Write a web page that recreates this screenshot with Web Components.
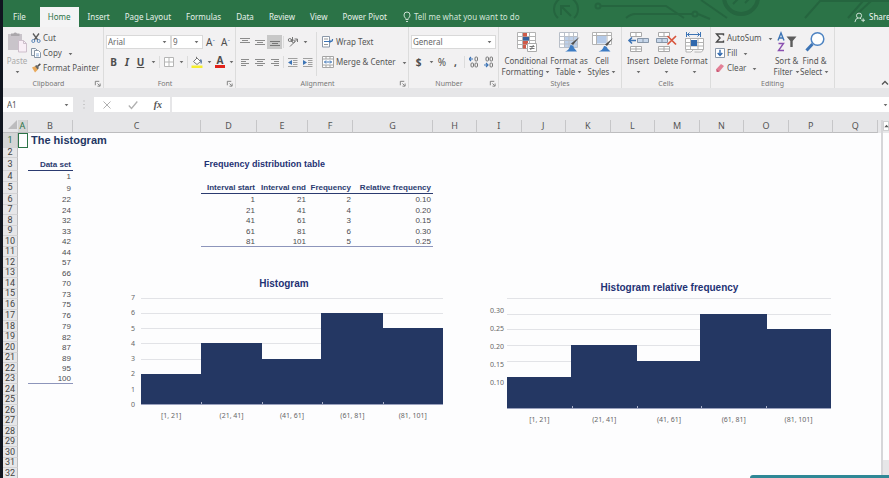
<!DOCTYPE html>
<html lang="en">
<head>
<meta charset="utf-8">
<title>The histogram</title>
<style>
  html, body { margin: 0; height: 100%; overflow: hidden; background: #10151f; }
  body { font: 8px/10px "Noto Sans", sans-serif; color: #555; }
</style>
</head>
<body>
<xl-app></xl-app>
<script>
const ICONS = {
  down: ['0 0 6 4', '<path d="M.8.8h4.4L3 3.4z" fill="#6b6b6b"/>'],
  up: ['0 0 6 4', '<path d="M3 .4 5.6 3.4H.4z" fill="#555"/>'],
  collapse: ['0 0 8 6', '<path d="M1 4.5 4 1.5 7 4.5" fill="none" stroke="#555" stroke-width="1.3"/>'],
  launch: ['0 0 8 8', '<path d="M1.5 6V1.5H6M4 4l2.500 2.500M7 4v3H4" fill="none" stroke="#777" stroke-width="1"/>'],
  paste: ['0 0 22 22', '<path d="M2 3h14v16H2z" fill="#c9c4ca"/><path d="M5 5V2.500h2.500a2 2 0 0 1 3.500 0H13.500V5z" fill="#aaa7ab"/><path d="M12.500 9.500h5l3 3v8.500h-8z" fill="#f8eef6" stroke="#cdbfcb"/><path d="M17.500 9.500v3h3" fill="none" stroke="#cdbfcb"/>'],
  cut: ['0 0 10 10', '<path d="M2 .5 6.800 7M8 .5 3.200 7" stroke="#5c5c5c" stroke-width="1.300" fill="none"/><circle cx="2.300" cy="8" r="1.500" fill="none" stroke="#5b86b8"/><circle cx="7.700" cy="8" r="1.500" fill="none" stroke="#5b86b8"/>'],
  copy: ['0 0 10 10', '<path d="M.5.500h4l1.500 1.500v5.500H.5z" fill="#f4f6f9" stroke="#8795a5"/><path d="M3.500 2.500h4l2 2v5h-6z" fill="#fff" stroke="#8795a5"/><path d="M5 6h3M5 7.800h3" stroke="#6f9acb" stroke-width=".8"/>'],
  brush: ['0 0 10 10', '<path d="M1 4.500 4.500 3 7 6.500 4 9.500z" fill="#e9a95b"/><path d="M4 3 5.500 2 8 5 6.500 6.500z" fill="#666"/><path d="M6.500 3.500 9.300.8" stroke="#4d4d4d" stroke-width="1.600"/>'],
  grid: ['0 0 10 10', '<path d="M.5.500h9v9h-9zM5 .5v9M.5 5h9" fill="#fff" stroke="#b5b5b5"/>'],
  fill: ['0 0 12 12', '<path d="M2.500 5.500 6 2l3.500 3.500L6 8.500z" fill="#fff" stroke="#777"/><path d="M5.500 3V.8" stroke="#777"/><path d="M9.500 3.500q1.500 2 .5 4" stroke="#41689b" stroke-width="1.300" fill="none"/><path d="M.5 9.500h11V12H.5z" fill="#f6ee2e"/>'],
  atop: ['0 0 10 10', '<path d="M0 1.500h10M2 3.500h6M0 5.500h10" stroke="#8b8b8b"/>'],
  amid: ['0 0 10 10', '<path d="M0 3.500h10M2 5.500h6M0 7.500h10" stroke="#8b8b8b"/>'],
  abot: ['0 0 10 10', '<path d="M0 4.500h10M2 6.500h6M0 8.500h10" stroke="#777"/>'],
  left: ['0 0 10 10', '<path d="M1 2.500h8M1 4.500h5M1 6.500h8M1 8.500h5" stroke="#8b8b8b"/>'],
  center: ['0 0 10 10', '<path d="M0 2.500h10M2 4.500h6M0 6.500h10M2 8.500h6" stroke="#8b8b8b"/>'],
  right: ['0 0 10 10', '<path d="M1 2.500h8M4 4.500h5M1 6.500h8M4 8.500h5" stroke="#8b8b8b"/>'],
  orient: ['0 0 12 12', '<path d="M3 10.500 10.500 3M10.500 3v3M10.500 3h-3" stroke="#777" fill="none"/><circle cx="2.800" cy="4" r="1.500" fill="none" stroke="#777"/><path d="M4.500 3v3M5.500 1v4.500" stroke="#777"/><circle cx="6.500" cy="5.500" r="1.300" fill="none" stroke="#777"/>'],
  outdent: ['0 0 11 11', '<path d="M1 1.500h9.500M6 3.500h4.500M6 5.500h4.500M6 7.500h4.500M1 9.500h9.500" stroke="#a0a0a0"/><path d="M5 3v5L1 5.500z" fill="#3d74b5"/>'],
  indent: ['0 0 11 11', '<path d="M1 1.500h9.500M6 3.500h4.500M6 5.500h4.500M6 7.500h4.500M1 9.500h9.500" stroke="#a0a0a0"/><path d="M1 3v5l4-2.500z" fill="#3d74b5"/>'],
  wrap: ['0 0 12 12', '<path d="M.5.500h7v10.500h-7z" fill="#fff" stroke="#8b98a8"/><path d="M2 3h4M2 8.500h4" stroke="#999"/><path d="M2 5.500h6.500q2 0 2-2V3" stroke="#3d74b5" stroke-width="1.200" fill="none"/><path d="M6 5.500 8.500 3.800v3.400z" fill="#3d74b5"/>'],
  merge: ['0 0 12 12', '<path d="M.5.500h11v11H.5zM.5 3h11M.5 9h11M4 .5V3M8 .5V3M4 9v2.500M8 9v2.500" fill="#fff" stroke="#a5a5a5"/><path d="M2.500 6h7M4 4.500 2.500 6 4 7.500M8 4.500 9.500 6 8 7.500" stroke="#3d74b5" fill="none"/>'],
  cond: ['0 0 22 22', '<path d="M2.500 1.500h18v16h-18zM2.500 5.500h18M2.500 9.500h18M2.500 13.500h18M7.500 1.500v16M14.500 1.500v16" fill="#fff" stroke="#b3b3b3"/><path d="M8 2h4v3.500H8zM8 14h3v3.500H8z" fill="#cf5a48"/><path d="M8 6h6v3.500H8z" fill="#35619c"/><path d="M8 10h5v3.500H8z" fill="#cf5a48"/><path d="M12.500 12.500h9v8h-9z" fill="#fff" stroke="#aaa"/><path d="M14.500 15.500h5M14.500 17.500h5M18.500 14l-3 5" stroke="#777"/>'],
  fmttab: ['0 0 22 22', '<path d="M1.500 1.500h18v15h-18z" fill="#fff"/><path d="M7 5.500h12.500v11H7z" fill="#bdd0ea"/><path d="M1.500 1.500h18v15h-18zM1.500 5.500h18M1.500 9.500h18M1.500 13h18M6.500 1.500v15M11 1.500v15M15.500 1.500v15" fill="none" stroke="#b9bfc8"/><path d="M21.500 6 15 14l-2-1.500z" fill="#505050"/><path d="M12.500 14q3 0 3.500 3l3 3.500H7q4-1 5.500-6.500z" fill="#3d7cc4"/>'],
  cellst: ['0 0 22 22', '<path d="M1.500 1.500h19v12h-19zM1.500 4.500h19M5.500 1.500v12M16 1.500v12" fill="#fff" stroke="#b3b3b3"/><path d="M6 5h9.500v7.500H6z" fill="#b5cae8"/><path d="M22 7 16 15l-2-1.500z" fill="#505050"/><path d="M13 15q3 0 3.500 2.500l3 3H7.500q4-1 5.500-5.500z" fill="#3d7cc4"/>'],
  ins: ['0 0 22 22', '<path d="M3.500 1.500h11v4h-11zM9 1.500v4M3.500 15.500h11v5h-11zM9 15.500v5M3.500 18h11" fill="#fff" stroke="#a9a9a9"/><path d="M10.500 7.500h11v4h-11zM16 7.500v4" fill="#c6d6ea" stroke="#8796a8"/><path d="M2 9.500h7M5 6.500 2 9.500l3 3" fill="none" stroke="#3d74b5" stroke-width="1.600"/>'],
  del: ['0 0 22 22', '<path d="M3.500 1.500h11v4h-11zM9 1.500v4M3.500 15.500h11v5h-11zM9 15.500v5M3.500 18h11" fill="#fff" stroke="#a9a9a9"/><path d="M1.500 7.500h11v4h-11zM7 7.500v4" fill="#c6d6ea" stroke="#8796a8"/><path d="m12.500 5 8.500 8.500M21 5l-8.500 8.500" stroke="#d8553c" stroke-width="1.700"/>'],
  fmt: ['0 0 22 22', '<path d="M3.500 1v5M17.500 1v5M4 3.500h13M6.500 1.500l-2 2 2 2M14.500 1.500l2 2-2 2" stroke="#3d74b5" fill="none"/><path d="M2.500 7.500h18v11h-18zM2.500 11.500h18M2.500 15h18M7.500 7.500v11M15 7.500v11M3 18.500v2.500h5l2-2M20.500 18.500l-2 2.500h-7" fill="#fff" stroke="#b2b2b2"/><path d="M8 9h6v6H8z" fill="#2f68ad"/>'],
  sigma: ['0 0 10 10', '<path d="M8.500 2.500V1H1.500L5 5 1.500 9h7V7.500" fill="none" stroke="#4a4a4a" stroke-width="1.400"/>'],
  filld: ['0 0 10 10', '<path d="M.5.500h9v9h-9z" fill="#fff" stroke="#8b98a8"/><path d="M5 1.800v5.500M2.700 5 5 7.500 7.300 5" stroke="#2f68ad" stroke-width="1.400" fill="none"/>'],
  eraser: ['0 0 10 10', '<path d="M1.300 6 6 1l3 2-4.500 5.500-2.700.5z" fill="#e37f96"/><path d="M1.300 6 4.500 8.500l-2.700.5z" fill="#c6546f"/>'],
  sort: ['0 0 22 22', '<path d="M2 9.500 5 2l3 7.500M3 7h4" fill="none" stroke="#3d74b5" stroke-width="1.400"/><path d="M2.500 12.500H7.500L2.500 19.500H8" fill="none" stroke="#8b50b0" stroke-width="1.400"/><path d="M10.500 5.500h10l-3.800 4.500v6h-2.400v-6z" fill="#5c5c5c"/>'],
  find: ['0 0 22 22', '<path d="M8.500 13 2.500 19.500" stroke="#3d74b5" stroke-width="3"/><circle cx="13.500" cy="8" r="6.300" fill="#fdfefe" stroke="#4d83c2" stroke-width="1.500"/>'],
  deci: ['0 0 10 12', '<path d="M0 3h4M2 1 0 3l2 2" fill="none" stroke="#3d74b5" stroke-width="1.200"/><rect x="6" y="1" width="2.500" height="4" rx="1" fill="none" stroke="#777"/><rect x="2" y="7" width="2.500" height="4" rx="1" fill="none" stroke="#777"/><rect x="6" y="7" width="2.500" height="4" rx="1" fill="none" stroke="#777"/>'],
  decd: ['0 0 10 12', '<rect x="2" y="1" width="2.500" height="4" rx="1" fill="none" stroke="#777"/><rect x="6" y="1" width="2.500" height="4" rx="1" fill="none" stroke="#777"/><path d="M0 9h4M2 7l2 2-2 2" fill="none" stroke="#3d74b5" stroke-width="1.200"/><rect x="6" y="7" width="2.500" height="4" rx="1" fill="none" stroke="#777"/>'],
  bulb: ['0 0 8 12', '<path d="M2.800 8.500V7.500Q1 6 1 4a3 3 0 0 1 6 0q0 2-1.800 3.500v1zM3 10.500h2" fill="none" stroke="#dcebe1" stroke-width=".9"/>'],
  person: ['0 0 12 12', '<circle cx="5.500" cy="4" r="2.800" fill="none" stroke="#dcebe1"/><path d="M1 11q.5-4 3.500-4.500M8 9h4M10 7v4M6.500 6.700l1.500 1" fill="none" stroke="#dcebe1"/>'],
  cross: ['0 0 10 10', '<path d="m1.500 1.500 7 7M8.500 1.500l-7 7" stroke="#b0b0b0"/>'],
  check: ['0 0 10 10', '<path d="M.8 5.500 3.500 8.500 9.300 1.500" fill="none" stroke="#b0b0b0" stroke-width="1.300"/>'],
  corner: ['0 0 10 10', '<path d="M10 0v10H0z" fill="#bcbcbe"/>'],
  dots: ['0 0 4 10', '<path d="M1.500 1h1M1.500 4.500h1M1.500 8h1" stroke="#aaa"/>']
};

/* Registers an element whose shadow root is filled by a function of the host. */
function define(name, css, render) {
  customElements.define(name, class extends HTMLElement {
    connectedCallback() {
      if (this.shadowRoot) return;
      this.attachShadow({ mode: 'open' }).innerHTML = `<style>*{box-sizing:border-box}${css}</style>${render(this)}`;
    }
  });
}
const attr = (el, n, d = '') => el.getAttribute(n) ?? d;
const icon = (name, w = 10, h = w) => `<xl-icon name="${name}" w="${w}" h="${h}"></xl-icon>`;

define('xl-icon', ':host{display:inline-flex;flex:none}svg{display:block}', el => {
  const [box, body] = ICONS[attr(el, 'name')];
  return `<svg aria-hidden="true" viewBox="${box}" width="${attr(el, 'w')}" height="${attr(el, 'h')}">${body}</svg>`;
});

/* Small square toolbar button; the slot holds a letter glyph when there is no icon. */
define('xl-tool', `
  :host{display:block;flex:none;width:15px}
  :host([mid]){width:12px}
  :host([pressed]) button{background:#c8c8c8}
  button{display:flex;align-items:center;justify-content:center;width:100%;height:14px;border:0;padding:0;background:none;color:#4e4e4e;font:inherit;font-size:10px}`,
  el => `<button aria-label="${attr(el, 'label')}">${el.hasAttribute('icon') ? icon(attr(el, 'icon'), attr(el, 'w', 10), attr(el, 'h', attr(el, 'w', 10))) : '<slot></slot>'}</button>`);

define('xl-drop', ':host{display:block;flex:none;width:10px}button{display:flex;align-items:center;justify-content:center;width:100%;height:14px;border:0;padding:0;background:none}',
  el => `<button aria-label="${attr(el, 'label', 'More')}">${icon('down', 5, 4)}</button>`);

define('xl-rule', ':host{display:block;flex:none;width:1px;height:12px;margin:0 1px;background:#dcdcdc}:host([tall]){height:44px;align-self:center}', () => '');

/* Icon with its caption on one line. */
define('xl-line', `
  :host{display:block;flex:none}
  button{display:flex;align-items:center;gap:2px;height:15px;border:0;padding:0;background:none;font:inherit;color:#555;white-space:nowrap}
  .d{margin-left:4px}`,
  el => `<button>${icon(attr(el, 'icon'), attr(el, 'w', 10))}<slot></slot>${el.hasAttribute('drop') ? `<span class="d">${icon('down', 5, 4)}</span>` : ''}</button>`);

/* Tall button: icon on top, two caption lines below. */
define('xl-big', `
  :host{display:block;flex:none;width:28px}
  :host([wide]){width:48px}
  :host([mid]){width:38px}
  :host([muted]) button{color:#aaa}
  button{display:flex;flex-direction:column;align-items:center;width:100%;border:0;padding:2px 0 0;background:none;font:inherit;line-height:11px;color:#555;white-space:nowrap}
  .t{margin-top:2px}
  .b{display:flex;align-items:center;gap:2px;height:11px}`,
  el => `<button>${icon(attr(el, 'icon'), 22)}<span class="t">${attr(el, 'top')}</span><span class="b">${attr(el, 'bottom')}${icon('down', 5, 4)}</span></button>`);

define('xl-combo', `
  :host{display:block;position:relative;flex:none;height:14px}
  select{display:block;width:100%;height:14px;appearance:none;border:1px solid #d9d9d9;border-radius:0;background:#fff;padding:0 2px 0 1px;font:inherit;line-height:12px;color:#666}
  xl-icon{position:absolute;right:4px;top:5px;pointer-events:none}`,
  el => `<select aria-label="${attr(el, 'label')}"><option>${attr(el, 'value')}</option></select>${icon('down', 5, 4)}`);

define('xl-group', `
  :host{display:flex;flex-direction:column;flex:none;border-right:1px solid #dcdcdc;padding-top:2px}
  .body{display:flex;height:50px}
  .cap{display:flex;align-items:center;height:9px;font-size:7px;line-height:9px;color:#777}
  .cap span{flex:1;text-align:center}
  .cap button{border:0;padding:0;margin-right:2px;background:none;display:flex}`,
  el => `<div class="body"><slot></slot></div><div class="cap"><span>${attr(el, 'caption')}</span>${el.hasAttribute('launch') ? `<button aria-label="${attr(el, 'caption')} settings">${icon('launch', 7)}</button>` : ''}</div>`);

define('xl-titlebar', `
  :host{display:block;position:relative;height:27px;background:#2b7347;overflow:hidden}
  .art{position:absolute;right:0;top:0}
  nav{position:relative;display:flex;align-items:flex-end;height:27px;padding-left:3px}
  a{display:block;height:20px;padding:0 8px 0 7px;line-height:20px;color:#e6f1ea;text-decoration:none;white-space:nowrap}
  a.on{background:#f4f4f5;color:#2b7347;margin:0 2px 0 6px;padding:0 8px}
  button{display:flex;align-items:center;gap:3px;height:20px;border:0;padding:0;margin-left:8px;background:none;font:inherit;color:#d2e5d9;white-space:nowrap}
  .share{margin-left:auto;gap:4px;width:35px;color:#f3f8f5}`,
  () => `<svg class="art" aria-hidden="true" width="349" height="27" fill="none" stroke="#25653f" stroke-width="2">
      <path d="M18 18a12 12 0 1 1 16 0M21 15V6h9M22 7l9 9"/>
      <circle cx="58" cy="6" r="2.500"/><path d="M61 6h65l18 12M86 18q5-4 9-4h58"/><circle cx="155" cy="14" r="2.500"/><path d="M158 14l12 5M161 0l26 18"/>
      <circle cx="201" cy="-3" r="17" stroke-width="4"/><path d="M193 4l6-6M205 3l5-5M265 18l15-17h69M308 18l15-17M317 14l14-13"/></svg>
    <nav><a href="#file">File</a><a href="#home" class="on">Home</a><a href="#insert">Insert</a><a href="#layout">Page Layout</a><a href="#formulas">Formulas</a><a href="#data">Data</a><a href="#review">Review</a><a href="#view">View</a><a href="#pivot">Power Pivot</a>
    <button>${icon('bulb', 8, 12)}Tell me what you want to do</button><button class="share">${icon('person', 11)}Share</button></nav>`);

define('xl-ribbon', `
  :host{display:flex;height:61px;background:#f2f1f2}
  .col{display:flex;flex-direction:column;padding-top:1px}
  .rows{display:flex;flex-direction:column;gap:6px;padding-top:6px}
  .row{display:flex;align-items:center;height:14px}
  .g1{width:101px}.g2{width:132px}.g3{width:173px}.g4{width:90px}.g5{width:123px}.g6{width:89px}.g7{width:124px}
  .font{width:65px}.size{width:32px}.num{width:85px}
  .red{border-bottom:3px solid #e2231a;line-height:9px;padding:0 2px;font-weight:700}
  .pad1{padding-left:1px}.pad2{padding-left:2px}.pad3{padding-left:3px}.pad4{padding-left:4px}
  sup{font-size:6px;line-height:6px;color:#3d74b5}
  .end{margin:auto 0 2px auto;border:0;padding:0;background:none;display:flex}`,
  () => `
  <xl-group class="g1" caption="Clipboard" launch>
    <xl-big icon="paste" top="Paste" bottom="" muted></xl-big>
    <div class="col"><xl-line icon="cut">Cut</xl-line><xl-line icon="copy" drop>Copy</xl-line><xl-line icon="brush">Format Painter</xl-line></div>
  </xl-group>
  <xl-group class="g2" caption="Font" launch>
    <div class="rows pad2">
      <div class="row"><xl-combo class="font" label="Font" value="Arial"></xl-combo><xl-combo class="size" label="Font size" value="9"></xl-combo><xl-tool label="Grow font">A<sup>ˆ</sup></xl-tool><xl-tool label="Shrink font">A<sup>ˇ</sup></xl-tool></div>
      <div class="row"><xl-tool label="Bold"><b>B</b></xl-tool><xl-tool mid label="Italic"><b><i>I</i></b></xl-tool><xl-tool label="Underline"><b><u>U</u></b></xl-tool><xl-drop></xl-drop><xl-rule></xl-rule><xl-tool icon="grid" label="Borders"></xl-tool><xl-drop></xl-drop><xl-rule></xl-rule><xl-tool icon="fill" w="12" label="Fill colour"></xl-tool><xl-drop></xl-drop><xl-tool mid label="Font colour"><span class="red">A</span></xl-tool><xl-drop></xl-drop></div>
    </div>
  </xl-group>
  <xl-group class="g3" caption="Alignment" launch>
    <div class="rows pad1">
      <div class="row"><xl-tool icon="atop" label="Top align"></xl-tool><xl-tool icon="amid" label="Middle align"></xl-tool><xl-tool icon="abot" pressed label="Bottom align"></xl-tool><xl-rule></xl-rule><xl-tool icon="orient" w="12" label="Orientation"></xl-tool><xl-drop></xl-drop></div>
      <div class="row"><xl-tool icon="left" label="Align left"></xl-tool><xl-tool icon="center" label="Center"></xl-tool><xl-tool icon="right" label="Align right"></xl-tool><xl-rule></xl-rule><xl-tool icon="outdent" w="11" label="Decrease indent"></xl-tool><xl-tool icon="indent" w="11" label="Increase indent"></xl-tool></div>
    </div>
    <xl-rule tall></xl-rule>
    <div class="rows pad4"><div class="row"><xl-line icon="wrap" w="12">Wrap Text</xl-line></div><div class="row"><xl-line icon="merge" w="12" drop>Merge &amp; Center</xl-line></div></div>
  </xl-group>
  <xl-group class="g4" caption="Number" launch>
    <div class="rows pad2">
      <div class="row"><xl-combo class="num" label="Number format" value="General"></xl-combo></div>
      <div class="row"><xl-tool label="Currency"><b>$</b></xl-tool><xl-drop></xl-drop><xl-tool mid label="Percent">%</xl-tool><xl-tool label="Comma"><b>,</b></xl-tool><xl-rule></xl-rule><xl-tool icon="deci" w="10" h="12" label="Increase decimal"></xl-tool><xl-tool icon="decd" w="10" h="12" label="Decrease decimal"></xl-tool></div>
    </div>
  </xl-group>
  <xl-group class="g5" caption="Styles"><div class="pad3"><xl-big wide icon="cond" top="Conditional" bottom="Formatting"></xl-big></div><xl-big mid icon="fmttab" top="Format as" bottom="Table"></xl-big><xl-big icon="cellst" top="Cell" bottom="Styles"></xl-big></xl-group>
  <xl-group class="g6" caption="Cells"><div class="pad2"><xl-big icon="ins" top="Insert" bottom=""></xl-big></div><xl-big icon="del" top="Delete" bottom=""></xl-big><xl-big icon="fmt" top="Format" bottom=""></xl-big></xl-group>
  <xl-group class="g7" caption="Editing">
    <div class="col pad4"><xl-line icon="sigma" drop>AutoSum</xl-line><xl-line icon="filld" drop>Fill</xl-line><xl-line icon="eraser" drop>Clear</xl-line></div>
    <xl-big icon="sort" top="Sort &amp;" bottom="Filter"></xl-big><xl-big icon="find" top="Find &amp;" bottom="Select"></xl-big>
  </xl-group>
  <button class="end" aria-label="Collapse the ribbon">${icon('collapse', 8, 6)}</button>`);

define('xl-formula-bar', `
  :host{display:flex;padding:9px 0 8px;background:#e6e6e8;align-items:center}
  label{position:relative;display:flex;width:70px}
  input{width:100%;height:15px;border:0;border-radius:0;padding:0 4px;background:#fff;font:inherit;color:#555}
  .long{position:relative;flex:1;margin-left:2px;width:auto}
  label xl-icon{position:absolute;right:4px;top:6px}
  .long xl-icon{right:1px}
  .dots{width:21px;display:flex;justify-content:center}
  .fx{display:flex;width:76px;height:15px;background:#fff;align-items:center;justify-content:space-around}
  .fx button{border:0;padding:0;background:none;display:flex;font:italic 700 10px/12px "Liberation Serif",serif;color:#555}`,
  () => `<label><input aria-label="Name box" value="A1">${icon('down', 5, 4)}</label><span class="dots">${icon('dots', 4, 10)}</span>
  <div class="fx"><button aria-label="Cancel">${icon('cross', 10)}</button><button aria-label="Enter">${icon('check')}</button><button aria-label="Insert function">fx</button></div>
  <label class="long"><input aria-label="Formula">${icon('down', 5, 4)}</label>`);

const DATA = [1, 9, 22, 24, 32, 33, 42, 44, 57, 66, 70, 73, 75, 76, 79, 82, 87, 89, 95, 100];
const FREQ = [['1', '21', '2', '0.10'], ['21', '41', '4', '0.20'], ['41', '61', '3', '0.15'], ['61', '81', '6', '0.30'], ['81', '101', '5', '0.25']];
const COLS = 'ABCDEFGHIJKLMNOPQ'.split('');

function cell(r, c) {
  if (r === 1 && c === 'A') return ['sel', ''];
  if (r === 1 && c === 'B') return ['title', 'The histogram'];
  if (r === 3 && c === 'B') return ['head', 'Data set'];
  if (r === 3 && c === 'D') return ['sub', 'Frequency distribution table'];
  if (c === 'B' && r > 3 && r < 24) return [r === 23 ? 'n last' : 'n', DATA[r - 4]];
  const k = 'DEFG'.indexOf(c);
  if (k >= 0 && r === 5) return ['head', ['Interval start', 'Interval end', 'Frequency', 'Relative frequency'][k]];
  if (k >= 0 && r > 5 && r < 11) return [r === 10 ? 'n last' : 'n', FREQ[r - 6][k]];
  return ['', ''];
}

define('xl-sheet', `
  :host{display:block;position:relative;flex:1;min-width:0;background:#fdfdfe;overflow:hidden}
  table{width:100%;table-layout:fixed;border-collapse:separate;border-spacing:0;font:8px/9px "Liberation Sans",Arial,sans-serif;color:#4c4c50}
  td,th{padding:0;height:11px;white-space:nowrap}
  thead th{height:13px;background:#e6e6e8;border-right:1px solid #c6c6c8;border-bottom:1px solid #bdbdbf;font:9px/12px "Noto Sans",sans-serif;color:#555}
  thead th.on,tbody th.on{background:#d4d5d5;color:#2b7347}
  thead th:first-child{border-right:0;padding-left:4px}
  tbody th{background:#e6e6e8;border-right:1px solid #bdbdbf;border-bottom:1px solid #d3d3d5;font:9px/9px Roboto,sans-serif;color:#444;text-align:center}
  tbody tr:nth-child(2n+7)>*{height:10px}
  tbody tr.r1>*{height:15px}
  tbody tr.r2>*{height:10px}
  tbody tr.r3>*{height:13px}
  tbody tr.r5>*{height:12px}
  tbody tr.r17>*{height:11px}
  .sel{outline:1px solid #2b7347;outline-offset:-1px}
  .n{text-align:right;padding-right:2px}
  .last{border-bottom:1px solid #8d95bb}
  .title{font-size:11px;line-height:13px;font-weight:700;color:#243763;padding-left:3px}
  .head{text-align:right;font-weight:700;color:#2b3b70;border-bottom:1px solid #2b3b70;padding-right:2px}
  .sub{font-size:9px;font-weight:700;color:#1f3274;padding-left:3px}`,
  () => `<table><colgroup>${[15, 10, 45, 128, 56, 51, 45, 80, 44].map(w => `<col style="width:${w}px">`).join('')}${'<col>'.repeat(9)}</colgroup>
  <thead><tr><th>${icon('corner', 9)}</th>${COLS.map(c => `<th${c === 'A' ? ' class="on"' : ''}>${c}</th>`).join('')}</tr></thead>
  <tbody>${Array.from({ length: 32 }, (_, i) => `<tr class="r${i + 1}"><th${i ? '' : ' class="on"'}>${i + 1}</th>${COLS.map(c => { const [k, t] = cell(i + 1, c); return `<td${k ? ` class="${k}"` : ''}>${t}</td>`; }).join('')}</tr>`).join('')}</tbody></table><slot></slot>`);

define('histo-chart', `
  :host{display:grid;grid-template-columns:var(--gutter,16px) 1fr var(--tail,0);grid-template-rows:auto 1fr auto;position:absolute;font:7px/8px "Noto Sans",sans-serif;color:#666}
  h2{grid-column:1/-1;margin:0 0 var(--gap,8px);font:700 10px/12px "Liberation Sans",Arial,sans-serif;color:#1f3274;text-align:center}
  .axis{grid-column:1;display:flex;flex-direction:column;justify-content:space-between;margin:var(--axis,-4px 0)}
  .axis span{width:16px;text-align:center}
  .plot{grid-column:2;position:relative;display:grid;grid-template-columns:60fr 61fr 59fr 62fr 60fr;align-items:end;border-bottom:1px solid #9aa1bd}
  .lines{position:absolute;inset:0;display:grid;grid-template-rows:repeat(7,1fr)}
  .lines i{border-top:1px solid #e2e3e7}
  .bar{position:relative;background:#243763}
  .ticks{position:absolute;inset:auto 0 0 0;height:2px;display:grid;grid-template-columns:repeat(5,1fr)}
  .ticks i+i{border-left:1px solid #aab0c8}
  .x{grid-column:2;display:grid;grid-template-columns:repeat(5,1fr);text-align:center;padding-top:7px}`,
  el => {
    const list = n => attr(el, n).split('|');
    return `<h2>${attr(el, 'heading')}</h2><div class="axis">${list('ticks').map(t => `<span>${t}</span>`).join('')}</div>
    <div class="plot"><div class="lines">${'<i></i>'.repeat(7)}</div>${list('values').map(v => `<div class="bar" style="height:${v / 7 * 100}%"></div>`).join('')}<div class="ticks">${'<i></i>'.repeat(5)}</div></div>
    <div class="x">${['[1, 21]', '(21, 41]', '(41, 61]', '(61, 81]', '(81, 101]'].map(t => `<span>${t}</span>`).join('')}</div>`;
  });

define('xl-scrollbar', `
  :host{display:flex;flex-direction:column;width:8px;background:#e6e6e8;border-left:2px solid #d6d6d9}
  button{height:10px;margin-top:1px;border:1px solid #d0d0d2;padding:0;background:#fff;display:flex;align-items:center;justify-content:center}
  .thumb{flex:1;margin:2px 0 18px;background:#fdfdfe}`,
  () => `<button aria-label="Scroll up">${icon('up', 5, 4)}</button><div class="thumb"></div>`);

define('xl-app', `
  :host{display:flex;flex-direction:column;height:100%;margin-left:3px;background:#e6e6e8}
  main{display:flex;flex:1;min-height:0}
  .edge{width:3px;background:#fdfdfe;margin-top:13px}
  .c1{left:122px;top:158px;width:318px;height:142px}
  .c2{left:486px;top:162px;width:361px;height:142px;--gap:4px;--gutter:18px;--tail:19px;--axis:9px 0 22px}
  .toast{position:fixed;right:0;bottom:0;width:139px;height:3px;background:#2f8896;border-radius:3px 0 0 0}`,
  () => `<xl-titlebar></xl-titlebar><xl-ribbon></xl-ribbon><xl-formula-bar></xl-formula-bar>
  <main><xl-sheet>
    <histo-chart class="c1" heading="Histogram" ticks="7|6|5|4|3|2|1|0" values="2|4|3|6|5"></histo-chart>
    <histo-chart class="c2" heading="Histogram relative frequency" ticks="0.30|0.25|0.20|0.15|0.10" values="2|4|3|6|5"></histo-chart>
  </xl-sheet><div class="edge"></div><xl-scrollbar></xl-scrollbar></main><div class="toast"></div>`);
</script>
</body>
</html>
